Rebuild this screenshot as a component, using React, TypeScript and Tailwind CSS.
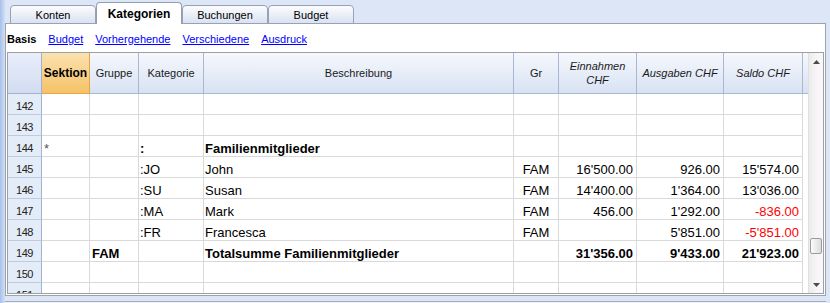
import type { ReactNode } from 'react';

const cols =
  'grid grid-cols-[34px_48px_49px_65px_310px_45px_78px_87px_79px_5px]';

type Row = {
  n: number;
  sek?: string;
  grp?: string;
  kat?: string;
  desc?: string;
  gr?: string;
  ein?: string;
  aus?: string;
  saldo?: string;
  bold?: boolean;
  katBold?: boolean;
  red?: boolean;
};

const rows: Row[] = [
  { n: 142 },
  { n: 143 },
  { n: 144, sek: '*', kat: ':', desc: 'Familienmitglieder', katBold: true },
  { n: 145, kat: ':JO', desc: 'John', gr: 'FAM', ein: "16'500.00", aus: '926.00', saldo: "15'574.00" },
  { n: 146, kat: ':SU', desc: 'Susan', gr: 'FAM', ein: "14'400.00", aus: "1'364.00", saldo: "13'036.00" },
  { n: 147, kat: ':MA', desc: 'Mark', gr: 'FAM', ein: '456.00', aus: "1'292.00", saldo: '-836.00', red: true },
  { n: 148, kat: ':FR', desc: 'Francesca', gr: 'FAM', aus: "5'851.00", saldo: "-5'851.00", red: true },
  {
    n: 149,
    grp: 'FAM',
    desc: 'Totalsumme Familienmitglieder',
    ein: "31'356.00",
    aus: "9'433.00",
    saldo: "21'923.00",
    bold: true,
  },
  { n: 150 },
  { n: 151 },
];

const tabs = ['Konten', 'Kategorien', 'Buchungen', 'Budget'];
const links = ['Budget', 'Vorhergehende', 'Verschiedene', 'Ausdruck'];

function HeadCell({ children, className = '' }: { children?: ReactNode; className?: string }) {
  return (
    <div
      className={
        'flex items-center justify-center text-center border-r border-b border-[#a8b8d2] bg-gradient-to-b from-[#f5f8fd] to-[#d9e2f3] text-[11px] text-[#1a1a1a] ' +
        className
      }
    >
      {children}
    </div>
  );
}

function Cell({ children, className = '' }: { children?: ReactNode; className?: string }) {
  return (
    <div className={'h-[21px] border-r border-b border-[#d9d9d9] pt-[2px] leading-[21px] whitespace-nowrap ' + className}>
      {children}
    </div>
  );
}

function Arrow({ down = false }: { down?: boolean }) {
  return (
    <div className="h-[17px] flex items-center justify-center">
      <svg width="7" height="4" viewBox="0 0 7 4">
        {down ? <path d="M0 0h7L3.5 4z" fill="#4a4a4a" /> : <path d="M0 4h7L3.5 0z" fill="#4a4a4a" />}
      </svg>
    </div>
  );
}

export default function App() {
  return (
    <div className="flex w-[830px] h-[303px] overflow-hidden bg-[#dce6f7] font-['Liberation_Sans',Arial,sans-serif] text-black">
      <div className="w-[5px] bg-gradient-to-r from-[#a7c0ea] to-[#d2dff6]" />

      <div className="flex flex-col w-[821px]">
        {/* Tabs */}
        <div className="relative z-10 flex items-end h-[24px] -mb-px pl-[5px]">
          {tabs.map((t, i) =>
            i === 1 ? (
              <div
                key={t}
                className="w-[86px] h-[22px] rounded-t-[4px] border border-b-0 border-[#929fb3] bg-white text-center pt-[4px] leading-[14px] text-[12px] font-bold"
              >
                {t}
              </div>
            ) : (
              <div
                key={t}
                className="w-[86px] h-[19px] rounded-t-[4px] border border-[#97a3b5] bg-gradient-to-b from-[#fbfcfe] to-[#dae2f1] text-center pt-[3px] leading-[13px] text-[11px]"
              >
                {t}
              </div>
            )
          )}
        </div>

        {/* Panel */}
        <div className="flex flex-col h-[273px] border border-[#9aa3b0] bg-white">
          <div className="flex h-[28px] gap-3 pl-px pt-[9px] leading-[13px] text-[11px]">
            <span className="font-bold">Basis</span>
            {links.map((l) => (
              <span key={l} className="text-[#0000ff] underline">
                {l}
              </span>
            ))}
          </div>

          {/* Grid frame */}
          <div className="flex h-[242px] mx-px border border-[#a0a0a0]">
            <div className="flex flex-col w-[800px]">
              <div className={`${cols} h-[41px]`}>
                <div className="border-r border-b border-[#9fb2d0] bg-gradient-to-b from-[#e9eefa] to-[#d2dcf1]" />
                <div className="flex items-center justify-center border-r border-b border-[#eba347] bg-gradient-to-b from-[#fbe2ae] to-[#f5c266] text-[12px] font-bold">
                  Sektion
                </div>
                <HeadCell>Gruppe</HeadCell>
                <HeadCell>Kategorie</HeadCell>
                <HeadCell>Beschreibung</HeadCell>
                <HeadCell>Gr</HeadCell>
                <HeadCell className="italic text-[11.5px] leading-[14px] px-2">Einnahmen CHF</HeadCell>
                <HeadCell className="italic text-[11.5px] whitespace-nowrap">Ausgaben CHF</HeadCell>
                <HeadCell className="italic text-[11.5px] whitespace-nowrap">Saldo CHF</HeadCell>
                <div className="border-b border-[#a8b8d2] bg-gradient-to-b from-[#f5f8fd] to-[#d9e2f3]" />
              </div>

              <div className="flex-1 overflow-hidden text-[13px]">
                {rows.map((r) => (
                  <div key={r.n} className={cols}>
                    <div className="h-[21px] border-r border-[#9fb4d4] border-b border-b-[#bccbe1] bg-[#e4ecf7] text-center pt-[2px] leading-[21px] text-[11px] tracking-[-0.4px] text-[#222]">
                      {r.n}
                    </div>
                    <Cell className="pl-[2px] text-[#555]">{r.sek}</Cell>
                    <Cell className="pl-[2px] font-bold">{r.grp}</Cell>
                    <Cell className={r.katBold ? 'pl-px font-bold' : 'pl-px'}>{r.kat}</Cell>
                    <Cell className={r.bold || r.katBold ? 'pl-px font-bold' : 'pl-px'}>{r.desc}</Cell>
                    <Cell className="text-center">{r.gr}</Cell>
                    <Cell className={'text-right pr-[3px] ' + (r.bold ? 'font-bold' : '')}>{r.ein}</Cell>
                    <Cell className={'text-right pr-[3px] ' + (r.bold ? 'font-bold' : '')}>{r.aus}</Cell>
                    <Cell className={'text-right pr-[3px] ' + (r.bold ? 'font-bold' : '') + (r.red ? ' text-[#ff0000]' : '')}>
                      {r.saldo}
                    </Cell>
                    <div className="h-[21px]" />
                  </div>
                ))}
              </div>
            </div>

            {/* Scrollbar */}
            <div className="flex flex-col w-[15px] border-l border-[#e0e0e0] bg-gradient-to-r from-[#ececec] via-[#f7f4f7] to-[#f9f7f9]">
              <Arrow />
              <div className="h-[168px]" />
              <div className="h-[16px] mx-px rounded-[2px] border border-[#9c9c9c] bg-gradient-to-r from-[#fbfbfb] to-[#dcdcdc]" />
              <div className="flex-1" />
              <Arrow down />
            </div>
          </div>
        </div>

        <div className="h-[5px]" />
        <div className="h-[2px] border-t border-[#a4acb8] bg-[#eef2fa]" />
      </div>

      <div className="w-[4px] bg-[#dce6f7]" />
    </div>
  );
}
